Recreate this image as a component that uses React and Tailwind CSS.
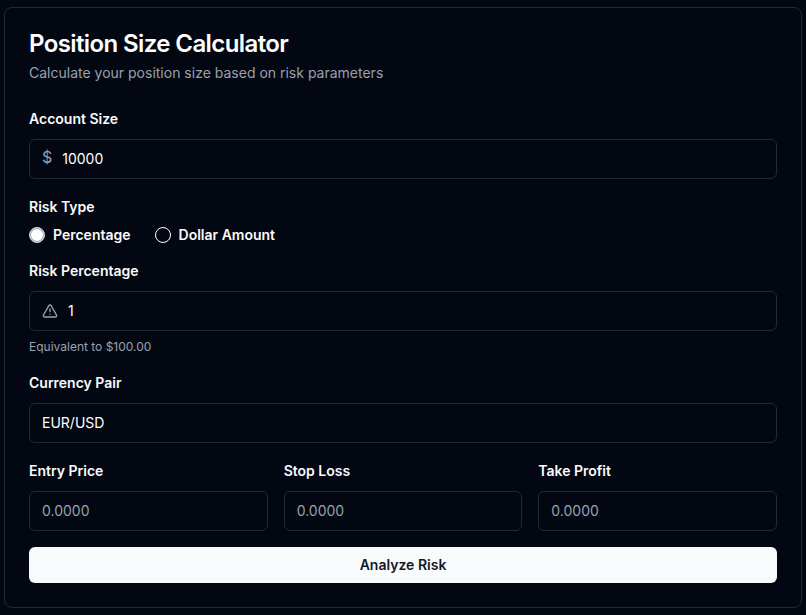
export default function App() {
  const label = "text-sm font-semibold text-gray-50 leading-5";
  const input = "h-10 rounded-md border border-[#1f2937] bg-[#030712] flex items-center px-3 text-sm";
  return (
    <div className="min-h-[615px] bg-[#030712] px-1 pt-[7px] pb-2" style={{ fontFamily: "Inter, 'Noto Sans', sans-serif" }}>
      <div className="rounded-lg border border-[#1f2937] bg-[#030712] px-6 pt-6 pb-6">
        <h1 className="text-2xl leading-6 font-semibold text-white tracking-tight">Position Size Calculator</h1>
        <p className="mt-[7px] text-sm leading-5 text-gray-400">Calculate your position size based on risk parameters</p>

        <div className={`mt-[26px] ${label}`}>Account Size</div>
        <div className={`mt-2.5 ${input}`}>
          <span className="text-gray-400 text-base mr-2.5 -mt-1">$</span>
          <span className="text-white">10000</span>
        </div>

        <div className={`mt-[18px] ${label}`}>Risk Type</div>
        <div className="mt-2 flex items-center gap-6 h-5">
          <label className="flex items-center gap-2">
            <span className="w-4 h-4 rounded-full bg-white border border-gray-300 shadow-[0_0_0_1px_#9ca3af_inset]"></span>
            <span className={label}>Percentage</span>
          </label>
          <label className="flex items-center gap-2">
            <span className="w-4 h-4 rounded-full border border-white"></span>
            <span className={label}>Dollar Amount</span>
          </label>
        </div>

        <div className={`mt-4 ${label}`}>Risk Percentage</div>
        <div className={`mt-2.5 ${input}`}>
          <svg width="16" height="16" viewBox="0 0 24 24" fill="none" stroke="#9ca3af" strokeWidth="2" strokeLinecap="round" strokeLinejoin="round" className="mr-2.5">
            <path d="m21.73 18-8-14a2 2 0 0 0-3.48 0l-8 14A2 2 0 0 0 4 21h16a2 2 0 0 0 1.73-3" />
            <path d="M12 9v4" />
            <path d="M12 17h.01" />
          </svg>
          <span className="text-white">1</span>
        </div>
        <p className="mt-2 text-xs leading-4 text-gray-400">Equivalent to $100.00</p>

        <div className={`mt-[18px] ${label}`}>Currency Pair</div>
        <div className={`mt-2.5 ${input} text-white`}>EUR/USD</div>

        <div className="mt-[18px] grid grid-cols-3 gap-4">
          {["Entry Price", "Stop Loss", "Take Profit"].map((t) => (
            <div key={t}>
              <div className={label}>{t}</div>
              <div className={`mt-2.5 ${input} text-gray-400`}>0.0000</div>
            </div>
          ))}
        </div>

        <button className="mt-4 w-full h-9 rounded-md bg-[#f9fafb] text-sm font-semibold text-[#111827]">Analyze Risk</button>
      </div>
    </div>
  );
}
